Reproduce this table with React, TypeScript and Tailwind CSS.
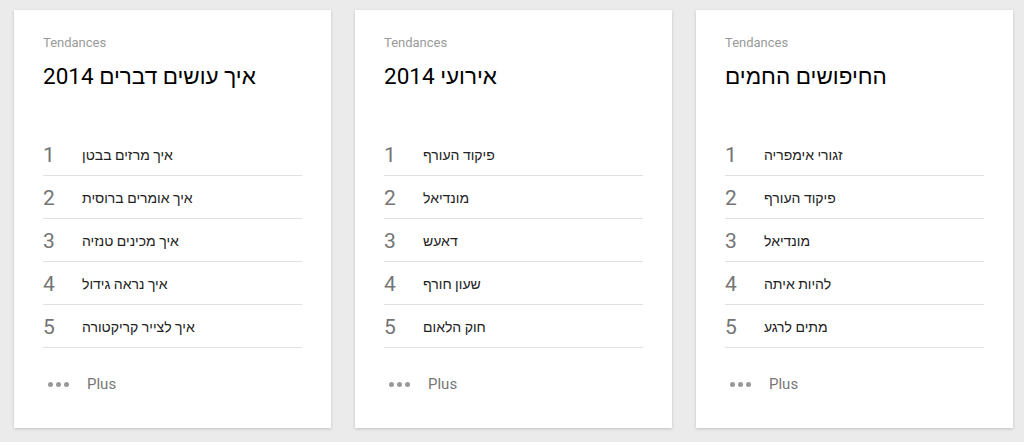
import React from 'react';

const cards = [
  {
    title: 'איך עושים דברים 2014',
    items: ['איך מרזים בבטן', 'איך אומרים ברוסית', 'איך מכינים טנזיה', 'איך נראה גידול', 'איך לצייר קריקטורה'],
  },
  {
    title: 'אירועי 2014',
    items: ['פיקוד העורף', 'מונדיאל', 'דאעש', 'שעון חורף', 'חוק הלאום'],
  },
  {
    title: 'החיפושים החמים',
    items: ['זגורי אימפריה', 'פיקוד העורף', 'מונדיאל', 'להיות איתה', 'מתים לרגע'],
  },
];

function TrendCard({ title, items }: { title: string; items: string[] }) {
  return (
    <div className="w-[317px] h-[418px] bg-white shadow-[0_1px_3px_rgba(0,0,0,0.18)] px-[29px] pt-[25px] flex flex-col">
      <div className="text-[13px] leading-4 text-[#9a9a9a]">Tendances</div>
      <div className="mt-[11px] text-[22.5px] leading-7 text-[#000]">{title}</div>
      <ul className="mt-[43px]">
        {items.map((item, i) => (
          <li key={i} className="h-[43px] flex items-center border-b border-[#e0e0e0] pt-[3px]">
            <span className="w-[39px] text-[21px] text-[#757575]">{i + 1}</span>
            <span className="text-[14px] text-[#222]">{item}</span>
          </li>
        ))}
      </ul>
      <div className="mt-[26px] flex items-center h-[20px]">
        <span className="flex gap-[3px] ml-[5px]">
          <span className="w-[5px] h-[5px] rounded-full bg-[#999]" />
          <span className="w-[5px] h-[5px] rounded-full bg-[#999]" />
          <span className="w-[5px] h-[5px] rounded-full bg-[#999]" />
        </span>
        <span className="ml-[18px] text-[15px] text-[#777]">Plus</span>
      </div>
    </div>
  );
}

export default function App() {
  return (
    <div className="w-[1024px] h-[442px] bg-[#ebebeb] pl-[14px] pt-[10px] flex gap-[24px] font-['Roboto','Liberation_Sans',sans-serif]">
      {cards.map((c, i) => (
        <TrendCard key={i} title={c.title} items={c.items} />
      ))}
    </div>
  );
}
